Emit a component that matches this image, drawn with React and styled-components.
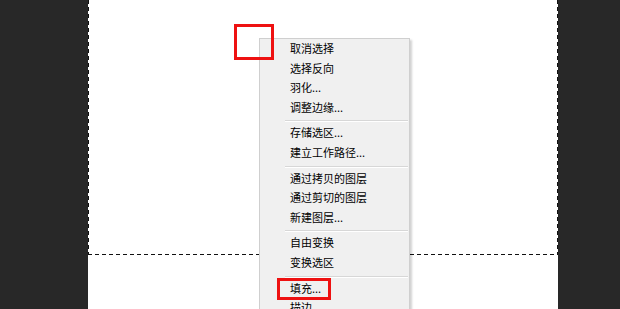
import styled, { createGlobalStyle } from "styled-components";

const GlobalStyle = createGlobalStyle`
  html, body {
    margin: 0;
    padding: 0;
    background: #282828;
    overflow: hidden;
  }
  #root {
    width: 620px;
    height: 309px;
  }
`;

const menuGroups = [
  ["取消选择", "选择反向", "羽化...", "调整边缘..."],
  ["存储选区...", "建立工作路径..."],
  ["通过拷贝的图层", "通过剪切的图层", "新建图层..."],
  ["自由变换", "变换选区"],
  ["填充...", "描边..."],
];

const App = () => (
  <>
    <GlobalStyle />
    <Workspace>
      <Canvas>
        <Selection />
      </Canvas>

      <ContextMenu>
        {menuGroups.map((group, gi) => (
          <Group key={gi}>
            {gi > 0 && <Separator />}
            {group.map((label) => (
              <MenuItem key={label}>{label}</MenuItem>
            ))}
          </Group>
        ))}
      </ContextMenu>

      {/* annotation boxes over the screenshot */}
      <Marker $left={234} $top={24} $width={40} $height={36} />
      <Marker $left={277} $top={278} $width={54} $height={22} />
    </Workspace>
  </>
);

export default App;

const Workspace = styled.div`
  position: relative;
  width: 620px;
  height: 309px;
  display: grid;
  grid-template-columns: 88px 470px 62px;
  background: #282828;
  overflow: hidden;
`;

const Canvas = styled.div`
  grid-column: 2;
  background: #ffffff;
  display: flex;
  flex-direction: column;
`;

const Selection = styled.div`
  height: 255px;
  box-sizing: border-box;
  background:
    repeating-linear-gradient(90deg, #111 0 4px, transparent 4px 7px) left bottom / 100% 1px no-repeat,
    repeating-linear-gradient(180deg, #111 0 4px, transparent 4px 7px) left top / 1px 100% no-repeat,
    repeating-linear-gradient(180deg, #111 0 4px, transparent 4px 7px) right top / 1px 100% no-repeat;
`;

const ContextMenu = styled.ul`
  position: absolute;
  left: 259px;
  top: 38px;
  width: 151px;
  margin: 0;
  padding: 0;
  list-style: none;
  box-sizing: border-box;
  background: #f0f0f0;
  border: 1px solid #cfcfcf;
  box-shadow: 2px 2px 2px rgba(0, 0, 0, 0.18);
  font-family: "Noto Sans CJK SC", "Noto Sans", sans-serif;
  font-size: 11px;
  color: #000;
`;

const Group = styled.li`
  display: flex;
  flex-direction: column;
`;

const Separator = styled.div`
  height: 0;
  margin: 3px 1px 1px 25px;
  border-top: 1px solid #d7d7d7;
  border-bottom: 1px solid #ffffff;
`;

const MenuItem = styled.div`
  height: 19.6px;
  line-height: 19.6px;
  padding-left: 30px;
  white-space: nowrap;
`;

const Marker = styled.div`
  position: absolute;
  left: ${(p) => p.$left}px;
  top: ${(p) => p.$top}px;
  width: ${(p) => p.$width}px;
  height: ${(p) => p.$height}px;
  box-sizing: border-box;
  border: 3px solid #ee1111;
`;
